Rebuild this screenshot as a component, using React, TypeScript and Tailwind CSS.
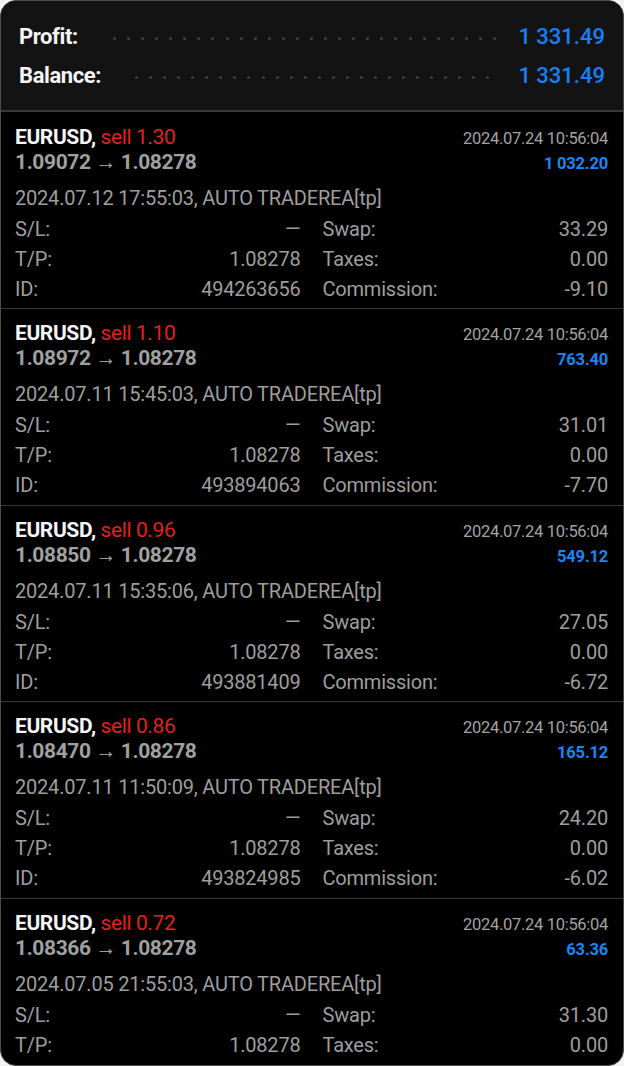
import React from "react";

type Trade = {
  lot: string;
  open: string;
  close: string;
  closeTime: string;
  profit: string;
  openTime: string;
  sl: string;
  tp: string;
  swap: string;
  taxes: string;
  id?: string;
  commission?: string;
};

const trades: Trade[] = [
  { lot: "1.30", open: "1.09072", close: "1.08278", closeTime: "2024.07.24 10:56:04", profit: "1 032.20", openTime: "2024.07.12 17:55:03", sl: "—", tp: "1.08278", swap: "33.29", taxes: "0.00", id: "494263656", commission: "-9.10" },
  { lot: "1.10", open: "1.08972", close: "1.08278", closeTime: "2024.07.24 10:56:04", profit: "763.40", openTime: "2024.07.11 15:45:03", sl: "—", tp: "1.08278", swap: "31.01", taxes: "0.00", id: "493894063", commission: "-7.70" },
  { lot: "0.96", open: "1.08850", close: "1.08278", closeTime: "2024.07.24 10:56:04", profit: "549.12", openTime: "2024.07.11 15:35:06", sl: "—", tp: "1.08278", swap: "27.05", taxes: "0.00", id: "493881409", commission: "-6.72" },
  { lot: "0.86", open: "1.08470", close: "1.08278", closeTime: "2024.07.24 10:56:04", profit: "165.12", openTime: "2024.07.11 11:50:09", sl: "—", tp: "1.08278", swap: "24.20", taxes: "0.00", id: "493824985", commission: "-6.02" },
  { lot: "0.72", open: "1.08366", close: "1.08278", closeTime: "2024.07.24 10:56:04", profit: "63.36", openTime: "2024.07.05 21:55:03", sl: "—", tp: "1.08278", swap: "31.30", taxes: "0.00" },
];

function Dots({ count, className }: { count: number; className: string }) {
  return (
    <div className={"flex-1 flex justify-between items-center translate-y-[2px] " + className}>
      {Array.from({ length: count }).map((_, i) => (
        <span key={i} className="block w-[3px] h-[3px] rounded-full bg-[#404040]" />
      ))}
    </div>
  );
}

function Cell({ label, value }: { label: string; value: string }) {
  return (
    <div className="flex justify-between items-baseline">
      <span>{label}</span>
      <span>{value}</span>
    </div>
  );
}

function TradeBlock({ t, first }: { t: Trade; first: boolean }) {
  return (
    <div
      className={
        "pl-[14px] pr-[15px] " +
        (first ? "pt-[12.5px] pb-[4.5px]" : "pt-[12px] pb-[4.5px] border-t border-[#3a3a3a]")
      }
    >
      <div className="flex items-baseline justify-between h-[25px]">
        <div className="text-[21px] leading-[25px] tracking-[-0.4px] whitespace-nowrap">
          <span className="font-bold text-[#f5f5f5]">EURUSD,</span>{" "}
          <span className="text-[#e3211f]">sell {t.lot}</span>
        </div>
        <span className="text-[16.5px] leading-[20px] tracking-[-0.3px] text-[#a3a3a3]">{t.closeTime}</span>
      </div>
      <div className="flex items-baseline justify-between h-[25px]">
        <div className="text-[21px] leading-[25px] font-bold tracking-[-0.4px] text-[#a0a0a0] whitespace-nowrap">
          {t.open} → {t.close}
        </div>
        <span className="text-[16.5px] leading-[20px] font-bold tracking-[-0.2px] text-[#1a86f4]">{t.profit}</span>
      </div>
      <div className="mt-2 text-[20px] leading-[30px] tracking-[-0.2px] text-[#9e9e9e]">
        <div className="whitespace-nowrap leading-[31px]">{t.openTime}, AUTO TRADEREA[tp]</div>
        <div className="grid grid-cols-2 gap-x-[22px]">
          <Cell label="S/L:" value={t.sl} />
          <Cell label="Swap:" value={t.swap} />
          <Cell label="T/P:" value={t.tp} />
          <Cell label="Taxes:" value={t.taxes} />
          {t.id && <Cell label="ID:" value={t.id} />}
          {t.commission && <Cell label="Commission:" value={t.commission} />}
        </div>
      </div>
    </div>
  );
}

export default function App() {
  return (
    <div className="w-[624px] h-[1066px] bg-[#f2f2f2] font-['Roboto',sans-serif]">
      <div className="w-full h-full rounded-[16px] overflow-hidden bg-black border border-[#4d4d4d]">
        <div className="bg-[#131313] border-b-2 border-[#383838] px-[18px] pt-[16px] pb-[15px]">
          <div className="flex items-center h-[39px]">
            <span className="text-[22px] leading-[39px] font-bold tracking-[-0.4px] text-[#f5f5f5]">Profit:</span>
            <Dots count={28} className="ml-[35px] mr-[22px]" />
            <span className="text-[22px] leading-[39px] font-medium text-[#1681f5]">1 331.49</span>
          </div>
          <div className="flex items-center h-[39px]">
            <span className="text-[22px] leading-[39px] font-bold tracking-[-0.4px] text-[#f5f5f5]">Balance:</span>
            <Dots count={26} className="ml-[34px] mr-[29px]" />
            <span className="text-[22px] leading-[39px] font-medium text-[#1681f5]">1 331.49</span>
          </div>
        </div>
        {trades.map((t, i) => (
          <TradeBlock key={i} t={t} first={i === 0} />
        ))}
      </div>
    </div>
  );
}
